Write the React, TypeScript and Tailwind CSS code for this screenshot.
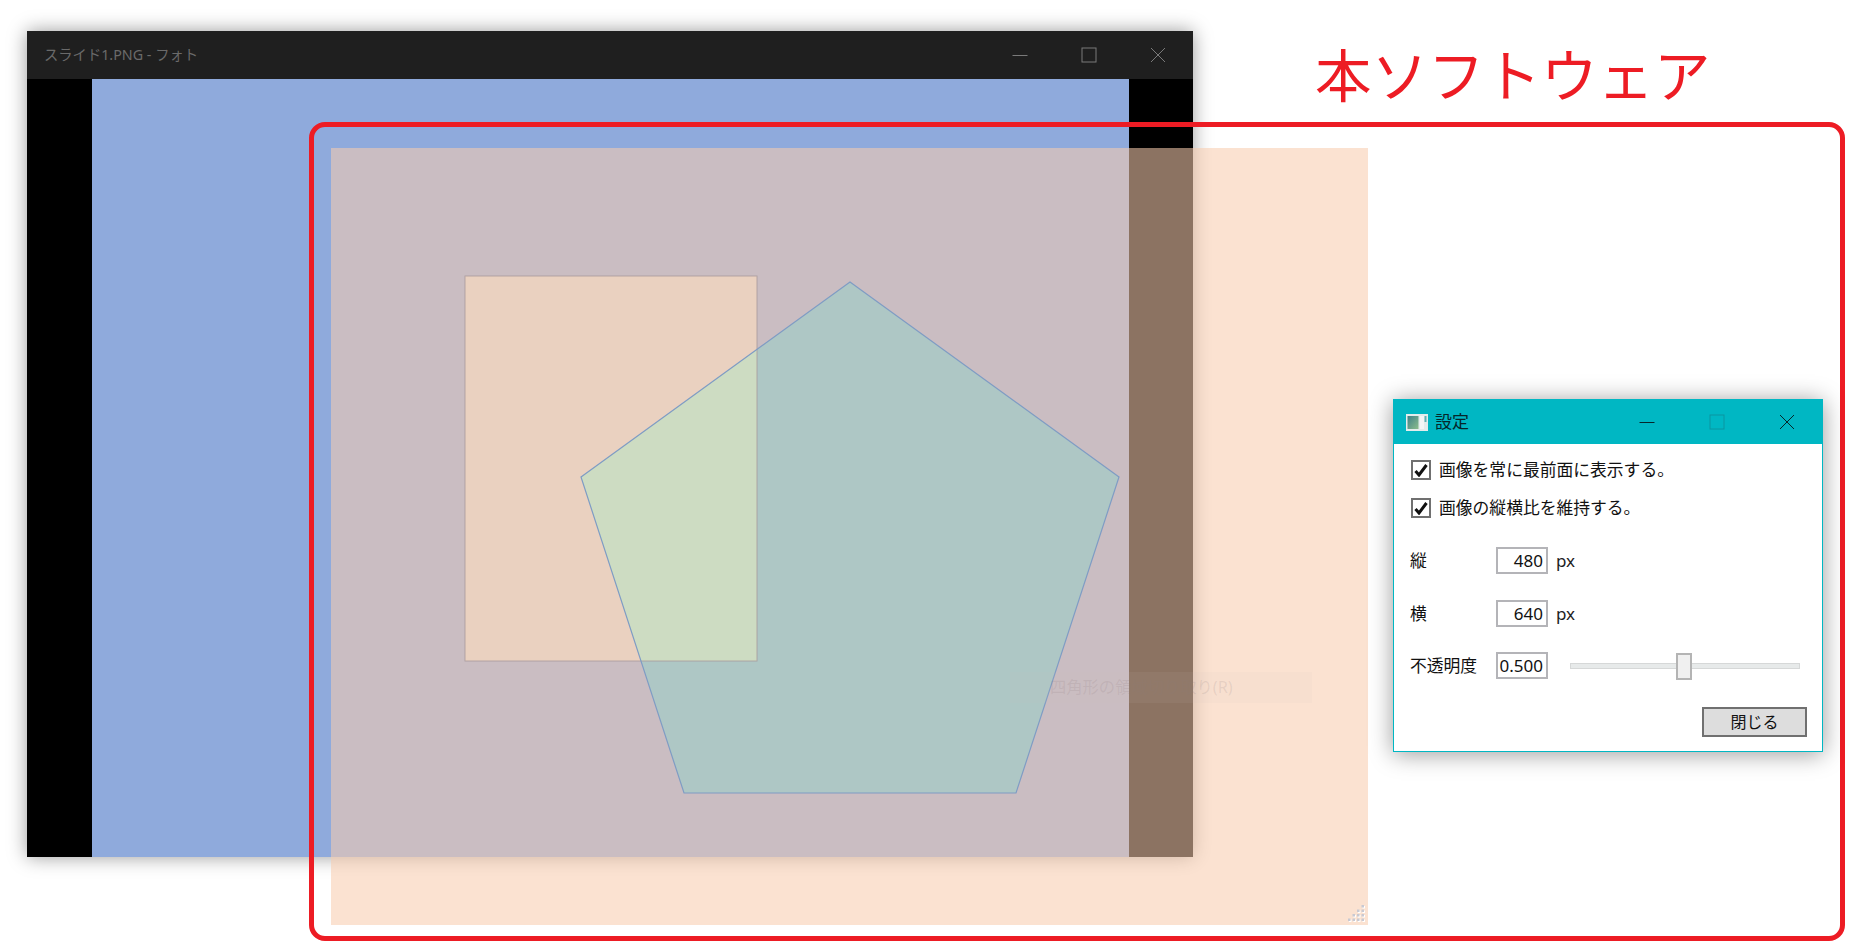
import React from 'react';

const RECT = { x: 134, y: 128, w: 292, h: 385 };
const PENTAGON = '519,134 788,329 685,645 353,645 250,329';

function CaptionIcon({ kind, color }: { kind: 'min' | 'max' | 'close'; color: string }) {
  return (
    <svg width="16" height="16" viewBox="0 0 16 16" fill="none" stroke={color} strokeWidth="1">
      {kind === 'min' && <path d="M0.5 8.5H15.5" />}
      {kind === 'max' && <rect x="1" y="1" width="14" height="14" />}
      {kind === 'close' && <path d="M1 1L15 15M15 1L1 15" />}
    </svg>
  );
}

function PhotoWindow() {
  return (
    <div className="absolute left-[27px] top-[31px] flex h-[826px] w-[1166px] flex-col shadow-[0_0_18px_rgba(0,0,0,0.4)]">
      <div className="flex h-[48px] items-center justify-between bg-[#1f1f1f]">
        <span className="pl-[17px] text-[14.3px] text-[#6a6a6a]">スライド1.PNG - フォト</span>
        <div className="flex pr-[1px]">
          <div className="flex h-[48px] w-[69px] items-center justify-center"><CaptionIcon kind="min" color="#7a7a7a" /></div>
          <div className="flex h-[48px] w-[69px] items-center justify-center"><CaptionIcon kind="max" color="#7a7a7a" /></div>
          <div className="flex h-[48px] w-[69px] items-center justify-center"><CaptionIcon kind="close" color="#7a7a7a" /></div>
        </div>
      </div>
      <div className="flex flex-1 bg-black pl-[65px] pr-[64px]">
        <div className="flex-1 bg-[#8faadc]" />
      </div>
    </div>
  );
}

function GripDots() {
  const dots = [
    [0, 3], [1, 3], [2, 3], [3, 3],
    [1, 2], [2, 2], [3, 2],
    [2, 1], [3, 1],
    [3, 0],
  ];
  return (
    <svg className="absolute bottom-[3px] right-[3px]" width="17" height="17" viewBox="0 0 17 17">
      {dots.map(([c, r]) => (
        <g key={`${c}-${r}`}>
          <rect x={c * 4.5 + 1} y={r * 4.5 + 1} width="2.5" height="2.5" fill="#ffffff" />
          <rect x={c * 4.5} y={r * 4.5} width="2.5" height="2.5" fill="#c9c9d2" />
        </g>
      ))}
    </svg>
  );
}

function ImageOverlay() {
  return (
    <div className="absolute left-[331px] top-[148px] h-[777px] w-[1037px] bg-[#f8cbad]/[0.565]">
      <svg className="absolute inset-0" width="1037" height="777" viewBox="0 0 1037 777">
        <defs>
          <clipPath id="rectClip">
            <rect x={RECT.x} y={RECT.y} width={RECT.w} height={RECT.h} />
          </clipPath>
        </defs>
        <rect x={RECT.x} y={RECT.y} width={RECT.w} height={RECT.h} fill="#ead1c0" />
        <polygon points={PENTAGON} fill="#aec7c5" />
        <polygon points={PENTAGON} fill="#cddcc2" clipPath="url(#rectClip)" />
        <rect x={RECT.x} y={RECT.y} width={RECT.w} height={RECT.h} fill="none" stroke="#a89a9c" strokeWidth="1" opacity="0.8" />
        <polygon points={PENTAGON} fill="none" stroke="#7f9cc4" strokeWidth="1.2" />
      </svg>
      <div className="absolute left-[679px] top-[524px] flex h-[31px] w-[302px] items-center bg-[#c8bcc0]/[0.08] pl-[40px] text-[16.3px] text-[#8c7a7c]/[0.16]">
        四角形の領域切り取り(R)
      </div>
      <GripDots />
    </div>
  );
}

function CheckRow({ label, className }: { label: string; className: string }) {
  return (
    <div className={`flex h-[20px] items-center ${className}`}>
      <div className="ml-[1px] flex h-[20px] w-[20px] items-center justify-center border-2 border-[#707070] bg-white">
        <svg width="14" height="13" viewBox="0 0 14 13" fill="none" stroke="#111111" strokeWidth="3">
          <path d="M1.5 7L5 11L12.5 1" />
        </svg>
      </div>
      <span className="ml-[8px] text-[16.8px] text-[#111111]">{label}</span>
    </div>
  );
}

function NumberBox({ value, unit }: { value: string; unit?: string }) {
  return (
    <>
      <div className="flex h-[27px] w-[52px] items-center justify-end border-2 border-[#b4b4b8] bg-white pr-[3px] text-[17px] text-[#111111]">
        {value}
      </div>
      {unit && <span className="ml-[8px] text-[17px] text-[#222222]">{unit}</span>}
    </>
  );
}

function SettingsDialog() {
  return (
    <div className="absolute left-[1393px] top-[399px] flex h-[353px] w-[430px] flex-col border border-[#00b7c3] bg-white shadow-[0_2px_22px_rgba(0,0,0,0.4)]">
      <div className="flex h-[44px] items-center bg-[#00b7c3]">
        <svg className="ml-[12px]" width="22" height="17" viewBox="0 0 22 17">
          <defs>
            <linearGradient id="iconFill" x1="0" y1="0" x2="1" y2="1">
              <stop offset="0" stopColor="#3f8088" />
              <stop offset="1" stopColor="#8cbd8c" />
            </linearGradient>
          </defs>
          <rect x="0" y="0" width="22" height="17" fill="#e4ecec" />
          <rect x="1.5" y="2" width="11" height="13" fill="url(#iconFill)" />
          <rect x="14" y="2" width="4" height="13" fill="#f4f6f6" />
          <rect x="18.5" y="2" width="2" height="6" fill="#5fb0b3" />
        </svg>
        <span className="ml-[7px] text-[17px] text-[#06262a]">設定</span>
        <div className="ml-auto flex">
          <div className="flex h-[44px] w-[70px] items-center justify-center"><CaptionIcon kind="min" color="#06262a" /></div>
          <div className="flex h-[44px] w-[70px] items-center justify-center"><CaptionIcon kind="max" color="#0a96a1" /></div>
          <div className="flex h-[44px] w-[70px] items-center justify-center"><CaptionIcon kind="close" color="#06262a" /></div>
        </div>
      </div>
      <div className="flex flex-1 flex-col pl-[16px] pr-[15px] text-[16.8px] text-[#111111]">
        <CheckRow label="画像を常に最前面に表示する。" className="mt-[16px]" />
        <CheckRow label="画像の縦横比を維持する。" className="mt-[18px]" />
        <div className="mt-[29px] flex h-[27px] items-center">
          <span className="w-[86px]">縦</span>
          <NumberBox value="480" unit="px" />
        </div>
        <div className="mt-[26px] flex h-[27px] items-center">
          <span className="w-[86px]">横</span>
          <NumberBox value="640" unit="px" />
        </div>
        <div className="mt-[25px] flex h-[27px] items-center">
          <span className="w-[86px]">不透明度</span>
          <NumberBox value="0.500" />
          <div className="relative ml-[22px] h-[6px] w-[230px] border border-[#d6d8d8] bg-[#e7eaea]">
            <div className="absolute left-[105px] top-[-11px] h-[27px] w-[16px] border-2 border-[#b4b4b4] bg-[#f0f0f0]" />
          </div>
        </div>
        <div className="mt-[28px] flex justify-end">
          <div className="flex h-[30px] w-[105px] items-center justify-center border-2 border-[#707070] bg-[#dddddd] text-[16px]">閉じる</div>
        </div>
      </div>
    </div>
  );
}

export default function App() {
  return (
    <div className="relative h-[945px] w-[1852px] overflow-hidden bg-white font-['Noto_Sans','Noto_Sans_CJK_JP',sans-serif]">
      <PhotoWindow />
      <ImageOverlay />
      <div className="absolute left-[309px] top-[122px] h-[819px] w-[1536px] rounded-[16px] border-[5px] border-[#ed1c24]" />
      <div className="absolute left-[1315px] top-[42px] text-[56.5px] leading-[68px] text-[#ed1c24]">本ソフトウェア</div>
      <SettingsDialog />
    </div>
  );
}
